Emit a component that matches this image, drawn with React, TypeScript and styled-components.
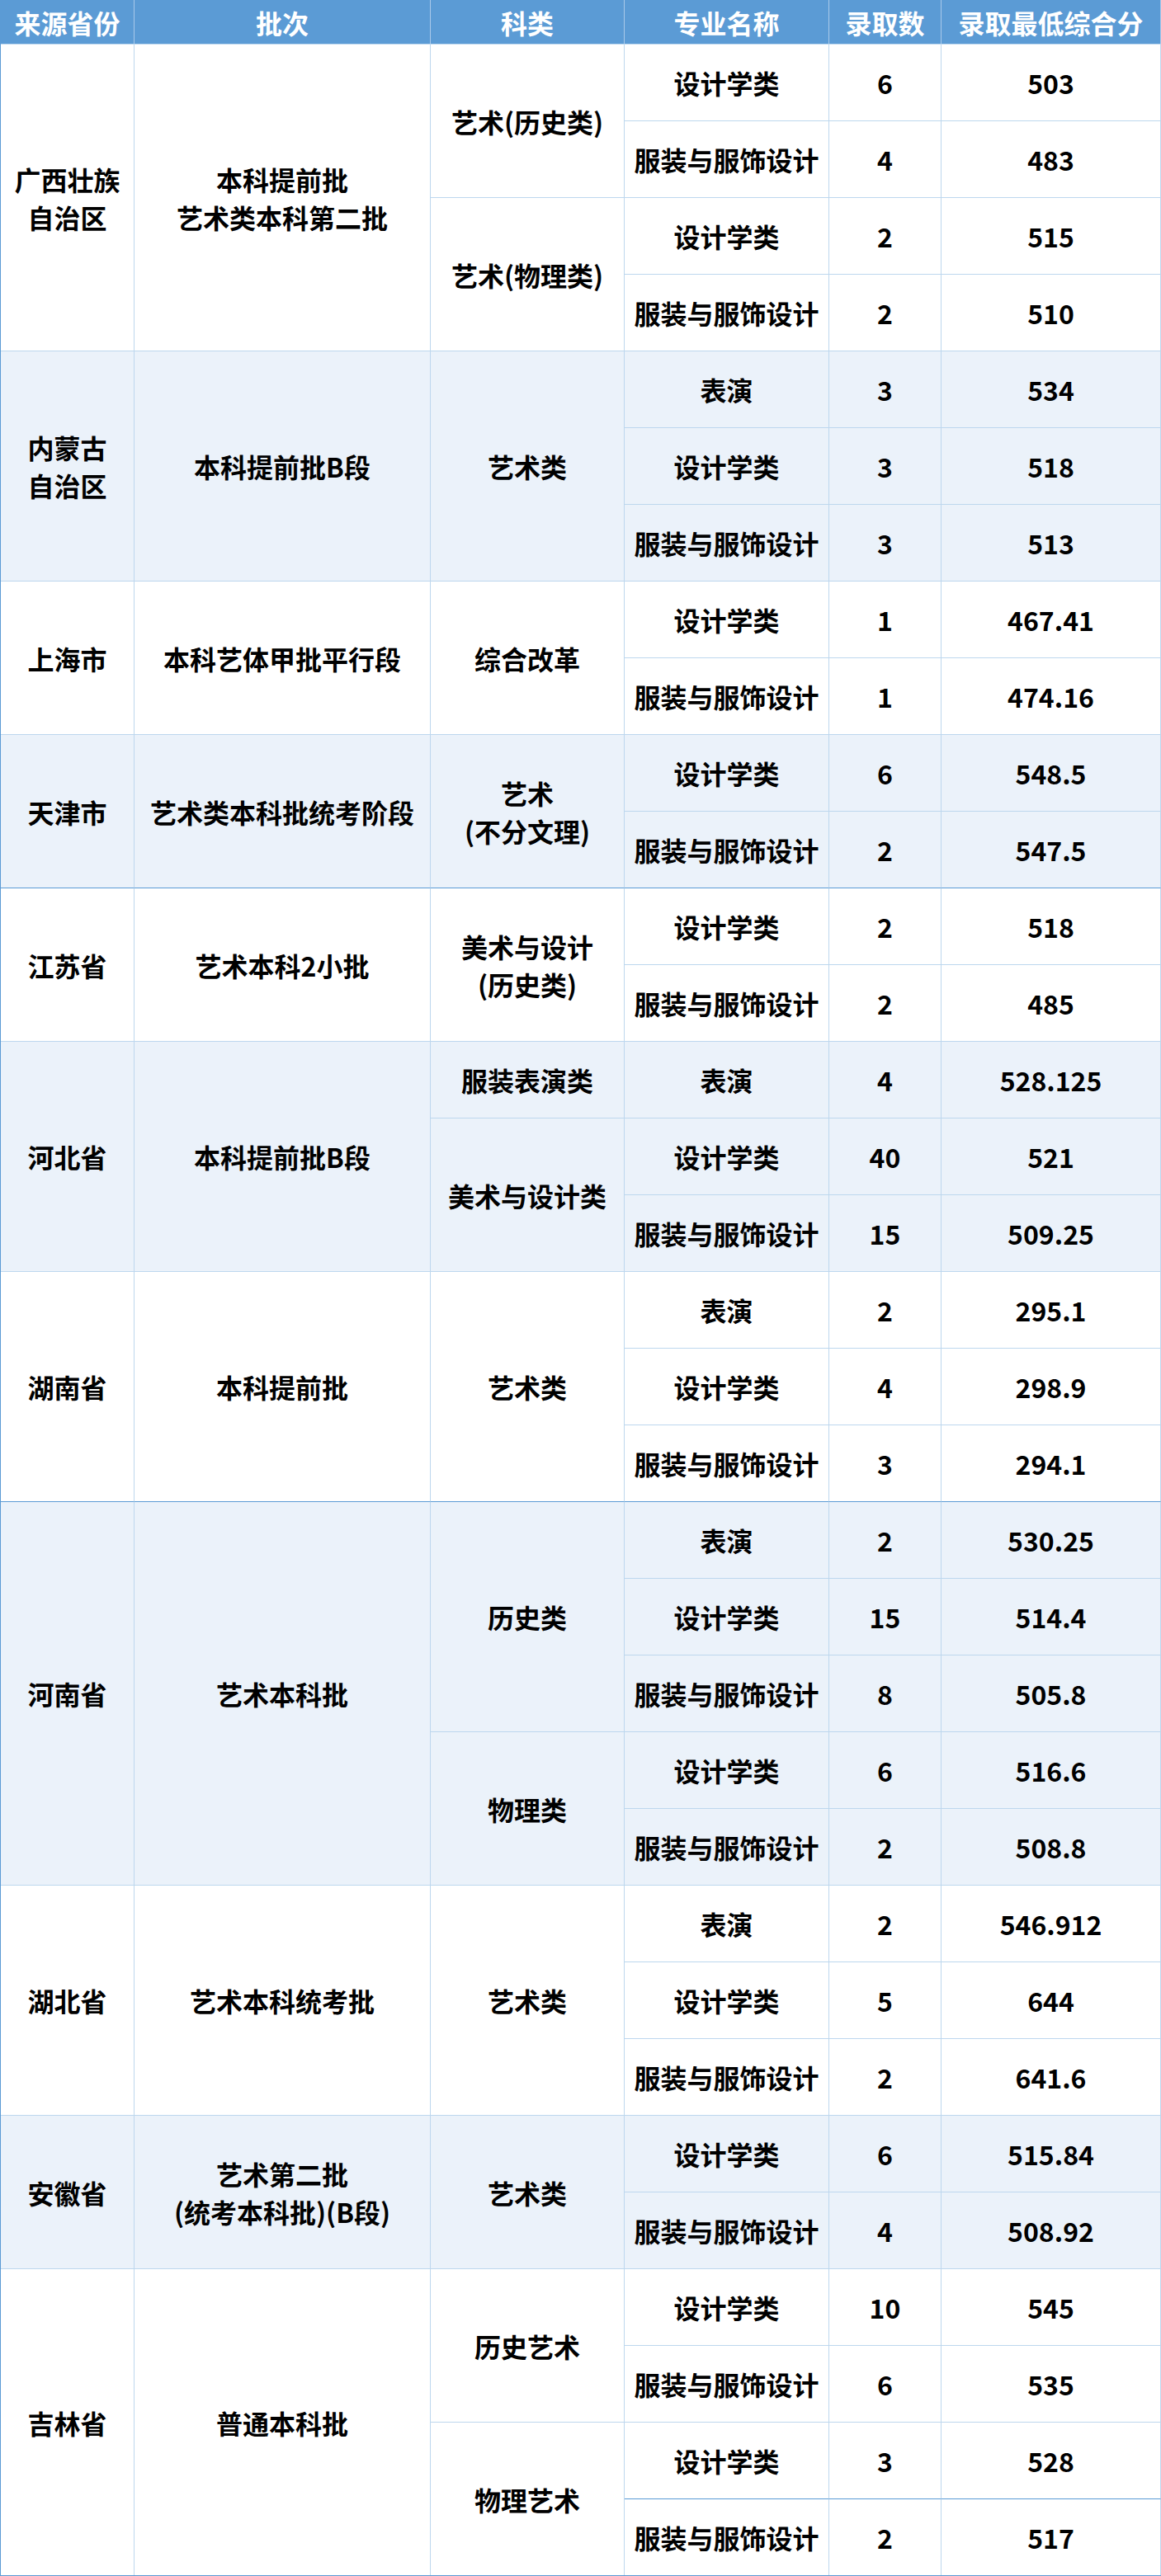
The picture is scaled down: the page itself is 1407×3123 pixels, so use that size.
import React from 'react';
import styled, { createGlobalStyle } from 'styled-components';

type Cell = { text: string; span?: number };
type Row = { cells: Cell[]; strong?: boolean };
type Group = { band: boolean; rows: Row[] };

const c = (text: string, span?: number): Cell => ({ text, span });

const HEADERS = ['来源省份', '批次', '科类', '专业名称', '录取数', '录取最低综合分'];
const WIDTHS = [162, 359, 235, 248, 136, 266];

const GROUPS: Group[] = [
  {
    band: false,
    rows: [
      { cells: [c('广西壮族\n自治区', 4), c('本科提前批\n艺术类本科第二批', 4), c('艺术(历史类)', 2), c('设计学类'), c('6'), c('503')] },
      { cells: [c('服装与服饰设计'), c('4'), c('483')] },
      { cells: [c('艺术(物理类)', 2), c('设计学类'), c('2'), c('515')] },
      { cells: [c('服装与服饰设计'), c('2'), c('510')] },
    ],
  },
  {
    band: true,
    rows: [
      { cells: [c('内蒙古\n自治区', 3), c('本科提前批B段', 3), c('艺术类', 3), c('表演'), c('3'), c('534')] },
      { cells: [c('设计学类'), c('3'), c('518')] },
      { cells: [c('服装与服饰设计'), c('3'), c('513')] },
    ],
  },
  {
    band: false,
    rows: [
      { cells: [c('上海市', 2), c('本科艺体甲批平行段', 2), c('综合改革', 2), c('设计学类'), c('1'), c('467.41')] },
      { cells: [c('服装与服饰设计'), c('1'), c('474.16')] },
    ],
  },
  {
    band: true,
    rows: [
      { cells: [c('天津市', 2), c('艺术类本科批统考阶段', 2), c('艺术\n(不分文理)', 2), c('设计学类'), c('6'), c('548.5')] },
      { cells: [c('服装与服饰设计'), c('2'), c('547.5')] },
    ],
  },
  {
    band: false,
    rows: [
      { strong: true, cells: [c('江苏省', 2), c('艺术本科2小批', 2), c('美术与设计\n(历史类)', 2), c('设计学类'), c('2'), c('518')] },
      { cells: [c('服装与服饰设计'), c('2'), c('485')] },
    ],
  },
  {
    band: true,
    rows: [
      { cells: [c('河北省', 3), c('本科提前批B段', 3), c('服装表演类'), c('表演'), c('4'), c('528.125')] },
      { cells: [c('美术与设计类', 2), c('设计学类'), c('40'), c('521')] },
      { cells: [c('服装与服饰设计'), c('15'), c('509.25')] },
    ],
  },
  {
    band: false,
    rows: [
      { cells: [c('湖南省', 3), c('本科提前批', 3), c('艺术类', 3), c('表演'), c('2'), c('295.1')] },
      { cells: [c('设计学类'), c('4'), c('298.9')] },
      { cells: [c('服装与服饰设计'), c('3'), c('294.1')] },
    ],
  },
  {
    band: true,
    rows: [
      { strong: true, cells: [c('河南省', 5), c('艺术本科批', 5), c('历史类', 3), c('表演'), c('2'), c('530.25')] },
      { cells: [c('设计学类'), c('15'), c('514.4')] },
      { cells: [c('服装与服饰设计'), c('8'), c('505.8')] },
      { cells: [c('物理类', 2), c('设计学类'), c('6'), c('516.6')] },
      { cells: [c('服装与服饰设计'), c('2'), c('508.8')] },
    ],
  },
  {
    band: false,
    rows: [
      { cells: [c('湖北省', 3), c('艺术本科统考批', 3), c('艺术类', 3), c('表演'), c('2'), c('546.912')] },
      { cells: [c('设计学类'), c('5'), c('644')] },
      { cells: [c('服装与服饰设计'), c('2'), c('641.6')] },
    ],
  },
  {
    band: true,
    rows: [
      { cells: [c('安徽省', 2), c('艺术第二批\n(统考本科批)(B段)', 2), c('艺术类', 2), c('设计学类'), c('6'), c('515.84')] },
      { cells: [c('服装与服饰设计'), c('4'), c('508.92')] },
    ],
  },
  {
    band: false,
    rows: [
      { cells: [c('吉林省', 4), c('普通本科批', 4), c('历史艺术', 2), c('设计学类'), c('10'), c('545')] },
      { cells: [c('服装与服饰设计'), c('6'), c('535')] },
      { cells: [c('物理艺术', 2), c('设计学类'), c('3'), c('528')] },
      { strong: true, cells: [c('服装与服饰设计'), c('2'), c('517')] },
    ],
  },
];

const GlobalStyle = createGlobalStyle`
  html, body {
    margin: 0;
    padding: 0;
    background: #ffffff;
  }
`;

const Table = styled.table`
  width: 1407px;
  table-layout: fixed;
  border-collapse: separate;
  border-spacing: 0;
  border-left: 1px solid #5b9bd5;
  border-bottom: 1px solid #5b9bd5;
  font-family: 'Noto Sans CJK SC', 'Noto Sans', sans-serif;
  font-weight: 700;
  font-size: 32px;
  line-height: 46px;
  color: #000000;
`;

const HeadRow = styled.tr`
  height: 53px;
`;

const HeadCell = styled.th`
  padding: 0;
  background: #5b9bd5;
  color: #ffffff;
  font-weight: 700;
  text-align: center;
  vertical-align: middle;
  border-right: 1px solid #a9c9ea;
  white-space: nowrap;
`;

const BodyRow = styled.tr`
  height: 93px;
`;

const BodyCell = styled.td<{ $band: boolean; $strong: boolean }>`
  padding: 0;
  text-align: center;
  vertical-align: middle;
  white-space: pre-line;
  background: ${(p) => (p.$band ? '#ebf2fa' : '#ffffff')};
  border-top: 1px solid ${(p) => (p.$strong ? '#5b9bd5' : '#bdd7ee')};
  border-right: 1px solid #bdd7ee;
`;

const App: React.FC = () => {
  return (
    <>
      <GlobalStyle />
      <Table>
        <colgroup>
          {WIDTHS.map((w, i) => (
            <col key={i} style={{ width: w }} />
          ))}
        </colgroup>
        <thead>
          <HeadRow>
            {HEADERS.map((h) => (
              <HeadCell key={h}>{h}</HeadCell>
            ))}
          </HeadRow>
        </thead>
        <tbody>
          {GROUPS.map((g, gi) =>
            g.rows.map((row, ri) => (
              <BodyRow key={`${gi}-${ri}`}>
                {row.cells.map((cell, ci) => (
                  <BodyCell
                    key={ci}
                    rowSpan={cell.span}
                    $band={g.band}
                    $strong={!!row.strong}
                  >
                    {cell.text}
                  </BodyCell>
                ))}
              </BodyRow>
            ))
          )}
        </tbody>
      </Table>
    </>
  );
};

export default App;
